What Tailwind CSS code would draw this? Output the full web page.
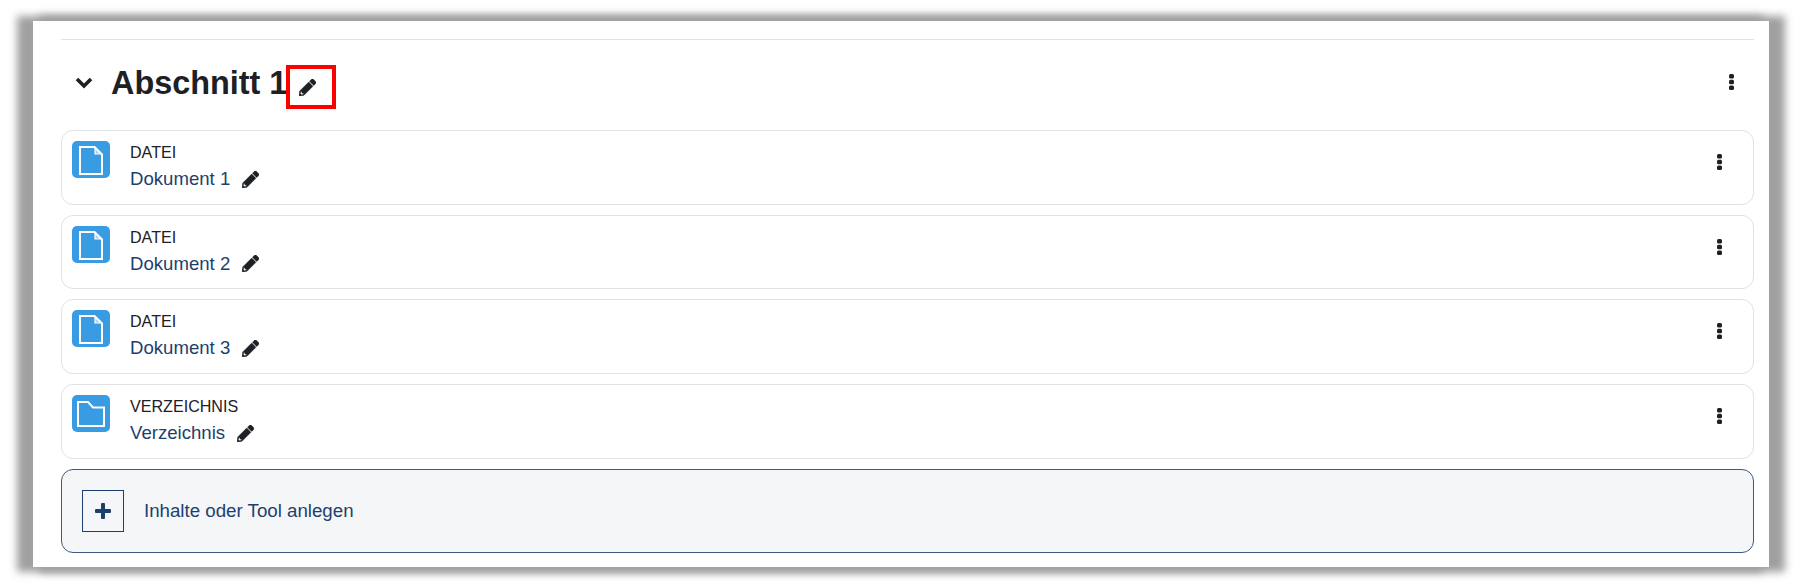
<!DOCTYPE html>
<html lang="en">
  <head>
    <meta charset="UTF-8" />
    <title>Abschnitt 1</title>
    <script src="https://cdn.jsdelivr.net/npm/@tailwindcss/browser@4"></script>
  </head>
  <body class="bg-white font-['Liberation_Sans',Arial,sans-serif]">
    <svg class="hidden">
      <symbol id="pencil" viewBox="0 0 512 512">
        <path fill="currentColor" stroke="currentColor" stroke-width="14" d="M497.9 142.1l-46.1 46.1c-4.7 4.7-12.3 4.7-17 0l-111-111c-4.7-4.7-4.7-12.3 0-17l46.1-46.1c18.7-18.7 49.1-18.7 67.9 0l60.1 60.1c18.8 18.7 18.8 49.1 0 67.9zM284.2 99.8L21.6 362.4.4 483.9c-2.9 16.4 11.4 30.6 27.8 27.8l121.5-21.3 262.6-262.6c4.7-4.7 4.7-12.3 0-17l-111-111c-4.8-4.7-12.4-4.7-17.1 0zM88 424h48v36.3l-64.5 11.3-31.1-31.1L51.7 376H88v48z" />
      </symbol>
      <symbol id="dots" viewBox="0 0 5 16">
        <rect x="0" y="0" width="5" height="4.6" rx="1.5" fill="currentColor" />
        <rect x="0" y="5.7" width="5" height="4.6" rx="1.5" fill="currentColor" />
        <rect x="0" y="11.4" width="5" height="4.6" rx="1.5" fill="currentColor" />
      </symbol>
      <symbol id="file" viewBox="0 0 38 38">
        <path fill="none" stroke="#fff" stroke-width="2" d="M8 6h14.5l7.5 7.5V33H8z" />
        <path fill="#fff" fill-opacity="0.55" stroke="#fff" stroke-width="1.2" d="M23 6.5v6.5h6.5z" />
      </symbol>
      <symbol id="folder" viewBox="0 0 38 38">
        <path fill="none" stroke="#fff" stroke-width="2" d="M6 7h10l5 5.5h11V31H6z" />
      </symbol>
    </svg>

    <div class="pt-[21px] pb-[21px] pl-[33px]">
      <div class="h-[546px] w-[1736px] bg-white pl-[28px] pr-[15px] shadow-[-11px_0_8px_5px_#a0a0a0,11px_0_8px_5px_#a0a0a0]">
        <div class="pt-[18px]">
          <div class="border-t border-[#dee2e6]"></div>

          <div class="flex h-[90px] items-center pb-[4px] pr-[20px]">
            <svg class="ml-[13px] h-[14px] w-[20px] text-[#1d2125]" viewBox="0 0 20 14" fill="none" stroke="currentColor" stroke-width="3.6"><path d="M3 3l7 7 7-7" /></svg>
            <h2 class="ml-[17px] text-[32.4px] font-bold leading-none text-[#1d2125]">Abschnitt 1</h2>
            <div class="-ml-[1px] mt-[8px] flex h-[44px] w-[50px] items-center border-[4px] border-[#ff0000] pl-[9px]">
              <svg class="h-[17px] w-[17px] text-[#1d2125]"><use href="#pencil" /></svg>
            </div>
            <svg class="ml-auto -mt-[2px] h-[16px] w-[5px] text-[#1d2125]"><use href="#dots" /></svg>
          </div>

          <div class="flex flex-col gap-[10px]">
            <div class="flex h-[74.7px] rounded-[12px] border border-[#dee2e6] pl-[10px] pr-[31px] pt-[10px]">
              <div class="h-[37px] w-[38px] rounded-[5px] bg-[#399be2]"><svg class="h-[38px] w-[38px]"><use href="#file" /></svg></div>
              <div class="ml-[20px]">
                <div class="mt-[2px] text-[16.1px] leading-[18px] text-[#1d2125]">DATEI</div>
                <div class="mt-[6px] flex items-center text-[18.6px] leading-[24px] text-[#1d3f6e]">Dokument 1<svg class="ml-[12px] h-[17px] w-[17px] text-[#1d2125]"><use href="#pencil" /></svg></div>
              </div>
              <svg class="ml-auto mt-[13px] h-[16px] w-[5px] text-[#1d2125]"><use href="#dots" /></svg>
            </div>

            <div class="flex h-[74.7px] rounded-[12px] border border-[#dee2e6] pl-[10px] pr-[31px] pt-[10px]">
              <div class="h-[37px] w-[38px] rounded-[5px] bg-[#399be2]"><svg class="h-[38px] w-[38px]"><use href="#file" /></svg></div>
              <div class="ml-[20px]">
                <div class="mt-[2px] text-[16.1px] leading-[18px] text-[#1d2125]">DATEI</div>
                <div class="mt-[6px] flex items-center text-[18.6px] leading-[24px] text-[#1d3f6e]">Dokument 2<svg class="ml-[12px] h-[17px] w-[17px] text-[#1d2125]"><use href="#pencil" /></svg></div>
              </div>
              <svg class="ml-auto mt-[13px] h-[16px] w-[5px] text-[#1d2125]"><use href="#dots" /></svg>
            </div>

            <div class="flex h-[74.7px] rounded-[12px] border border-[#dee2e6] pl-[10px] pr-[31px] pt-[10px]">
              <div class="h-[37px] w-[38px] rounded-[5px] bg-[#399be2]"><svg class="h-[38px] w-[38px]"><use href="#file" /></svg></div>
              <div class="ml-[20px]">
                <div class="mt-[2px] text-[16.1px] leading-[18px] text-[#1d2125]">DATEI</div>
                <div class="mt-[6px] flex items-center text-[18.6px] leading-[24px] text-[#1d3f6e]">Dokument 3<svg class="ml-[12px] h-[17px] w-[17px] text-[#1d2125]"><use href="#pencil" /></svg></div>
              </div>
              <svg class="ml-auto mt-[13px] h-[16px] w-[5px] text-[#1d2125]"><use href="#dots" /></svg>
            </div>

            <div class="flex h-[74.7px] rounded-[12px] border border-[#dee2e6] pl-[10px] pr-[31px] pt-[10px]">
              <div class="h-[37px] w-[38px] rounded-[5px] bg-[#399be2]"><svg class="h-[38px] w-[38px]"><use href="#folder" /></svg></div>
              <div class="ml-[20px]">
                <div class="mt-[2px] text-[16.1px] leading-[18px] text-[#1d2125]">VERZEICHNIS</div>
                <div class="mt-[6px] flex items-center text-[18.6px] leading-[24px] text-[#1d3f6e]">Verzeichnis<svg class="ml-[12px] h-[17px] w-[17px] text-[#1d2125]"><use href="#pencil" /></svg></div>
              </div>
              <svg class="ml-auto mt-[13px] h-[16px] w-[5px] text-[#1d2125]"><use href="#dots" /></svg>
            </div>

            <div class="flex h-[84px] items-center rounded-[12px] border border-[#3c5a7d] bg-[#f5f6f8] pl-[20px]">
              <div class="flex h-[42px] w-[42px] items-center justify-center border border-[#1d3f6e]">
                <svg class="h-[16px] w-[16px] text-[#1d3f6e]" viewBox="0 0 16 16" fill="currentColor"><path d="M6 1q0-1 1-1h2q1 0 1 1v5h5q1 0 1 1v2q0 1-1 1h-5v5q0 1-1 1H7q-1 0-1-1v-5H1q-1 0-1-1V7q0-1 1-1h5z" /></svg>
              </div>
              <span class="ml-[20px] text-[18.7px] text-[#1d3f6e]">Inhalte oder Tool anlegen</span>
            </div>
          </div>
        </div>
      </div>
    </div>
  </body>
</html>
